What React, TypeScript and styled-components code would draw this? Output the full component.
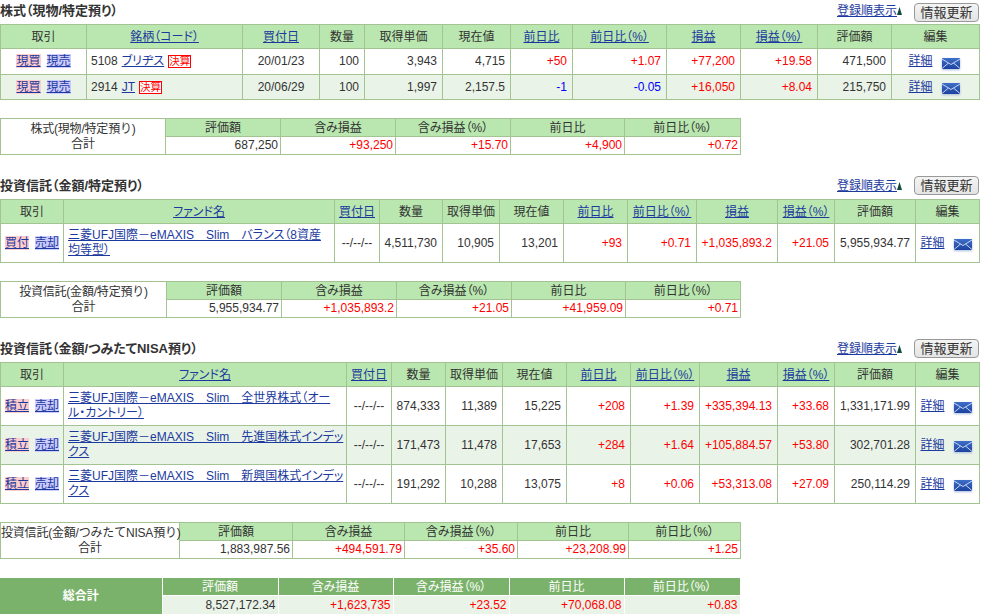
import React from "react";
import styled, { createGlobalStyle } from "styled-components";

const GlobalStyle = createGlobalStyle`
  html, body {
    margin: 0;
    padding: 0;
    background: #ffffff;
    color: #333333;
    font-family: "Liberation Sans", "Noto Sans CJK JP", sans-serif;
    font-size: 12px;
  }
`;

const Page = styled.div`
  width: 981px;
`;

const Section = styled.section<{ $gap: number }>`
  margin-bottom: ${(p) => p.$gap}px;
`;

const TitleRow = styled.div`
  display: flex;
  align-items: flex-start;
  justify-content: space-between;
  width: 979px;
  height: 24px;
`;

const Title = styled.h2`
  margin: 3px 0 0;
  font-size: 13px;
  line-height: 15px;
  font-weight: bold;
  color: #333333;
  font-feature-settings: "palt";
`;

const SortTools = styled.div`
  display: flex;
  align-items: flex-start;
`;

const SortLink = styled.a`
  margin-top: 4px;
  line-height: 14px;
  color: #1c3a9e;
  text-decoration: underline;
`;

const SortMark = styled.svg`
  width: 5px;
  height: 8px;
  margin: 7px 12px 0 0;
`;

const RefreshButton = styled.button<{ $top: number }>`
  width: 65px;
  height: 19px;
  margin-top: ${(p) => p.$top}px;
  padding: 0;
  border: 1px solid #999999;
  border-radius: 4px;
  background: linear-gradient(#f4f4f4, #e4e4e4);
  color: #333333;
  font-family: inherit;
  font-size: 13px;
  line-height: 17px;
`;

const Table = styled.table<{ $w: number }>`
  width: ${(p) => p.$w}px;
  table-layout: fixed;
  border-collapse: collapse;
  background: #ffffff;
`;

const Col = styled.col<{ $w: number }>`
  width: ${(p) => p.$w}px;
`;

const Row = styled.tr<{ $alt?: boolean }>`
  background: ${(p) => (p.$alt ? "#eaf3e8" : "#ffffff")};
`;

const HeadCell = styled.th<{ $h: number }>`
  height: ${(p) => p.$h}px;
  padding: 0;
  border: 1px solid #a3c492;
  background: #b9e7af;
  color: #333333;
  font-weight: normal;
  font-size: 12px;
  line-height: 14px;
  text-align: center;
  font-feature-settings: "palt";
`;

const HeadLink = styled.a`
  color: #1c3a9e;
  text-decoration: underline;
`;

const Cell = styled.td<{ $h: number; $align?: string; $tone?: string; $pad?: number }>`
  height: ${(p) => p.$h}px;
  padding: 0 ${(p) => p.$pad ?? 5}px 0 ${(p) => Math.min(p.$pad ?? 5, 2)}px;
  border: 1px solid #a3c492;
  color: ${(p) => p.$tone ?? "#333333"};
  font-size: 12px;
  line-height: 15px;
  text-align: ${(p) => p.$align ?? "right"};
  white-space: nowrap;
`;

const NameCell = styled(Cell)`
  padding: 0 0 0 4px;
  text-align: left;
`;

const CodeCell = styled(Cell)`
  padding: 0 0 0 4px;
  text-align: left;
`;

const TradeCell = styled(Cell)`
  padding: 0;
  text-align: center;
`;

const TradeLink = styled.a<{ $kind: "buy" | "sell" }>`
  background: ${(p) => (p.$kind === "buy" ? "#ffcccc" : "#ccccff")};
  color: #1c3a9e;
  text-decoration: underline;
  & + & {
    margin-left: 6px;
  }
`;

const FundLink = styled.a`
  color: #1c3a9e;
  text-decoration: underline;
  font-feature-settings: "palt";
`;

const StockLink = styled(FundLink)`
  margin: 0 4px;
`;

const Badge = styled.span`
  display: inline-block;
  width: 21px;
  height: 11px;
  border: 1px solid #ff0000;
  background: #ffffff;
  color: #ff0000;
  font-size: 10.5px;
  line-height: 11px;
  text-align: center;
  vertical-align: middle;
`;

const EditBox = styled.div`
  display: flex;
  align-items: center;
  justify-content: center;
  gap: 9px;
  padding-right: 3px;
`;

const Envelope = styled.svg`
  width: 18px;
  height: 11px;
  margin-top: 3px;
  filter: drop-shadow(0 1px 1px #a9bbd8);
`;

const SummaryLabel = styled.td`
  padding: 0;
  border: 1px solid #a3c492;
  background: #ffffff;
  color: #333333;
  font-size: 12px;
  line-height: 15px;
  letter-spacing: -0.2px;
  text-align: center;
  white-space: nowrap;
`;

const TotalHead = styled.th<{ $h: number }>`
  height: ${(p) => p.$h}px;
  padding: 0;
  border: 1px solid #ffffff;
  border-top: 0;
  background: #7bb26b;
  color: #ffffff;
  font-weight: normal;
  font-size: 12px;
  line-height: 14px;
  text-align: center;
  font-feature-settings: "palt";
`;

const TotalLabel = styled(TotalHead)`
  font-weight: bold;
  border-left: 0;
  border-bottom: 0;
`;

const TotalValue = styled.td<{ $h: number; $tone?: string }>`
  height: ${(p) => p.$h}px;
  padding: 0 2px;
  border: 1px solid #ffffff;
  border-bottom: 0;
  background: #eaf3e8;
  color: ${(p) => p.$tone ?? "#333333"};
  font-size: 12px;
  line-height: 14px;
  text-align: right;
`;

const toneOf = (v: string) =>
  v.startsWith("+") ? "#ff0000" : v.startsWith("-") ? "#0000ff" : undefined;

type HeadItem = { label: string; link?: boolean };

const stockHeads: HeadItem[] = [
  { label: "取引" },
  { label: "銘柄（コード）", link: true },
  { label: "買付日", link: true },
  { label: "数量" },
  { label: "取得単価" },
  { label: "現在値" },
  { label: "前日比", link: true },
  { label: "前日比（%）", link: true },
  { label: "損益", link: true },
  { label: "損益（%）", link: true },
  { label: "評価額" },
  { label: "編集" },
];

const fundHeads: HeadItem[] = stockHeads.map((h, i) => (i === 1 ? { label: "ファンド名", link: true } : h));

const summaryHeads = ["評価額", "含み損益", "含み損益（%）", "前日比", "前日比（%）"];

const stocks = [
  { code: "5108", name: "ブリヂス", date: "20/01/23", values: ["100", "3,943", "4,715", "+50", "+1.07", "+77,200", "+19.58", "471,500"], h: 25 },
  { code: "2914", name: "JT", date: "20/06/29", values: ["100", "1,997", "2,157.5", "-1", "-0.05", "+16,050", "+8.04", "215,750"], h: 24 },
];

const mainFund = [
  {
    lines: ["三菱UFJ国際－eMAXIS　Slim　バランス（8資産", "均等型）"],
    values: ["4,511,730", "10,905", "13,201", "+93", "+0.71", "+1,035,893.2", "+21.05", "5,955,934.77"],
  },
];

const nisaFunds = [
  {
    lines: ["三菱UFJ国際－eMAXIS　Slim　全世界株式（オー", "ル・カントリー）"],
    values: ["874,333", "11,389", "15,225", "+208", "+1.39", "+335,394.13", "+33.68", "1,331,171.99"],
  },
  {
    lines: ["三菱UFJ国際－eMAXIS　Slim　先進国株式インデッ", "クス"],
    values: ["171,473", "11,478", "17,653", "+284", "+1.64", "+105,884.57", "+53.80", "302,701.28"],
  },
  {
    lines: ["三菱UFJ国際－eMAXIS　Slim　新興国株式インデッ", "クス"],
    values: ["191,292", "10,288", "13,075", "+8", "+0.06", "+53,313.08", "+27.09", "250,114.29"],
  },
];

const Head = ({ title, buttonTop = 1 }: { title: string; buttonTop?: number }) => (
  <TitleRow>
    <Title>{title}</Title>
    <SortTools>
      <SortLink>登録順表示</SortLink>
      <SortMark viewBox="0 0 5 8">
        <polygon points="2.5,0 5,8 0,8" fill="#14493a" />
      </SortMark>
      <RefreshButton $top={buttonTop}>情報更新</RefreshButton>
    </SortTools>
  </TitleRow>
);

const MailIcon = () => (
  <Envelope viewBox="0 0 18 11">
    <defs>
      <linearGradient id="mail" x1="0" y1="0" x2="0" y2="1">
        <stop offset="0" stopColor="#3f6fc9" />
        <stop offset="1" stopColor="#1c429f" />
      </linearGradient>
    </defs>
    <rect width="18" height="11" fill="url(#mail)" />
    <path d="M0 1 L9 6.5 L18 1 M0 10.5 L6.5 5 M18 10.5 L11.5 5" fill="none" stroke="#c7d6f2" strokeWidth="1" />
  </Envelope>
);

const EditCell = ({ h }: { h: number }) => (
  <Cell $h={h} $align="center" $pad={0}>
    <EditBox>
      <FundLink>詳細</FundLink>
      <MailIcon />
    </EditBox>
  </Cell>
);

const HeadRow = ({ heads }: { heads: HeadItem[] }) => (
  <tr>
    {heads.map((h) => (
      <HeadCell key={h.label} $h={23}>
        {h.link ? <HeadLink>{h.label}</HeadLink> : h.label}
      </HeadCell>
    ))}
  </tr>
);

const Trade = ({ h, buy, sell }: { h: number; buy: string; sell: string }) => (
  <TradeCell $h={h}>
    <TradeLink $kind="buy">{buy}</TradeLink>
    <TradeLink $kind="sell">{sell}</TradeLink>
  </TradeCell>
);

const FundTable = ({ cols, buy, funds }: { cols: number[]; buy: string; funds: typeof nisaFunds }) => (
  <Table $w={980}>
    <colgroup>
      {cols.map((w, i) => (
        <Col key={i} $w={w} />
      ))}
    </colgroup>
    <tbody>
      <HeadRow heads={fundHeads} />
      {funds.map((f, i) => (
        <Row key={f.lines[0]} $alt={i % 2 === 1}>
          <Trade h={38} buy={buy} sell="売却" />
          <NameCell $h={38}>
            <FundLink>
              {f.lines[0]}
              <br />
              {f.lines[1]}
            </FundLink>
          </NameCell>
          <Cell $h={38} $align="center" $pad={0}>
            --/--/--
          </Cell>
          {f.values.map((v, j) => (
            <Cell key={j} $h={38} $tone={toneOf(v)}>
              {v}
            </Cell>
          ))}
          <EditCell h={38} />
        </Row>
      ))}
    </tbody>
  </Table>
);

const Summary = ({ label, cols, values }: { label: string; cols: number[]; values: string[] }) => (
  <Table $w={741}>
    <colgroup>
      {cols.map((w, i) => (
        <Col key={i} $w={w} />
      ))}
    </colgroup>
    <tbody>
      <tr>
        <SummaryLabel rowSpan={2}>
          {label}
          <br />
          合計
        </SummaryLabel>
        {summaryHeads.map((h) => (
          <HeadCell key={h} $h={17}>
            {h}
          </HeadCell>
        ))}
      </tr>
      <tr>
        {values.map((v) => (
          <Cell key={v} $h={17} $tone={toneOf(v)} $pad={2}>
            {v}
          </Cell>
        ))}
      </tr>
    </tbody>
  </Table>
);

const App = () => (
  <Page>
    <GlobalStyle />
    <Section $gap={18}>
      <Head title="株式（現物/特定預り）" buttonTop={3} />
      <Table $w={980}>
        <colgroup>
          {[86, 156, 77, 45, 78, 68, 62, 94, 74, 77, 74, 88].map((w, i) => (
            <Col key={i} $w={w} />
          ))}
        </colgroup>
        <tbody>
          <HeadRow heads={stockHeads} />
          {stocks.map((s, i) => (
            <Row key={s.code} $alt={i % 2 === 1}>
              <Trade h={s.h} buy="現買" sell="現売" />
              <CodeCell $h={s.h}>
                {s.code}
                <StockLink>{s.name}</StockLink>
                <Badge>決算</Badge>
              </CodeCell>
              <Cell $h={s.h} $align="center" $pad={0}>
                {s.date}
              </Cell>
              {s.values.map((v, j) => (
                <Cell key={j} $h={s.h} $tone={toneOf(v)}>
                  {v}
                </Cell>
              ))}
              <EditCell h={s.h} />
            </Row>
          ))}
        </tbody>
      </Table>
    </Section>
    <Section $gap={20}>
      <Summary
        label="株式(現物/特定預り)"
        cols={[165, 115, 115, 115, 114, 116]}
        values={["687,250", "+93,250", "+15.70", "+4,900", "+0.72"]}
      />
    </Section>
    <Section $gap={18}>
      <Head title="投資信託（金額/特定預り）" />
      <FundTable cols={[63, 271, 45, 63, 57, 64, 64, 69, 81, 57, 81, 64]} buy="買付" funds={mainFund} />
    </Section>
    <Section $gap={20}>
      <Summary
        label="投資信託(金額/特定預り)"
        cols={[166, 115, 115, 115, 114, 115]}
        values={["5,955,934.77", "+1,035,893.2", "+21.05", "+41,959.09", "+0.71"]}
      />
    </Section>
    <Section $gap={18}>
      <Head title="投資信託（金額/つみたてNISA預り）" />
      <FundTable cols={[63, 283, 45, 54, 57, 64, 64, 69, 78, 57, 81, 64]} buy="積立" funds={nisaFunds} />
    </Section>
    <Section $gap={19}>
      <Summary
        label="投資信託(金額/つみたてNISA預り)"
        cols={[179, 113, 112, 113, 111, 112]}
        values={["1,883,987.56", "+494,591.79", "+35.60", "+23,208.99", "+1.25"]}
      />
    </Section>
    <Table $w={740}>
      <colgroup>
        {[162, 116, 115, 116, 115, 116].map((w, i) => (
          <Col key={i} $w={w} />
        ))}
      </colgroup>
      <tbody>
        <tr>
          <TotalLabel rowSpan={2} $h={17}>
            総合計
          </TotalLabel>
          {summaryHeads.map((h) => (
            <TotalHead key={h} $h={17}>
              {h}
            </TotalHead>
          ))}
        </tr>
        <tr>
          {["8,527,172.34", "+1,623,735", "+23.52", "+70,068.08", "+0.83"].map((v) => (
            <TotalValue key={v} $h={18} $tone={toneOf(v)}>
              {v}
            </TotalValue>
          ))}
        </tr>
      </tbody>
    </Table>
  </Page>
);

export default App;
